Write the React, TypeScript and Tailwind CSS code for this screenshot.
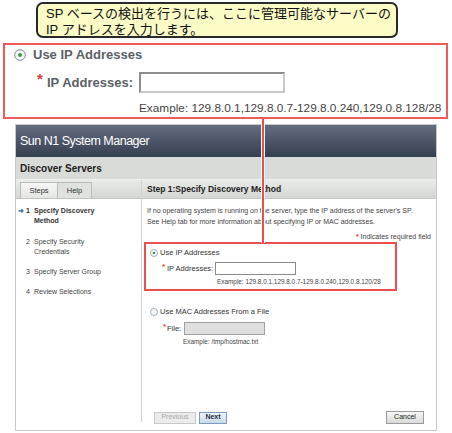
import React from "react";

const sans = { fontFamily: '"Liberation Sans", Arial, sans-serif' };

function Radio({ size, on }: { size: number; on?: boolean }) {
  return (
    <svg width={size} height={size} viewBox="0 0 12 12" className="shrink-0">
      <circle cx="6" cy="6" r="5.3" fill="#f4f6f8" stroke="#7d8fa0" strokeWidth="1" />
      {on && <circle cx="6" cy="6" r="2" fill="#3f9a3f" />}
    </svg>
  );
}

function Steps() {
  return (
    <div className="pt-[7px] text-[7px] leading-[10px] text-[#444]">
      <div className="flex font-bold text-[#333]">
        <span className="w-[10px] pl-[2px] text-[#2f6aa8]">➜</span>
        <span className="w-[8px]">1</span>
        <span>
          Specify Discovery
          <br />
          Method
        </span>
      </div>
      <div className="flex mt-[11px]">
        <span className="w-[10px]"></span>
        <span className="w-[8px]">2</span>
        <span>
          Specify Security
          <br />
          Credentials
        </span>
      </div>
      <div className="flex mt-[10px]">
        <span className="w-[10px]"></span>
        <span className="w-[8px]">3</span>
        <span>Specify Server Group</span>
      </div>
      <div className="flex mt-[10px]">
        <span className="w-[10px]"></span>
        <span className="w-[8px]">4</span>
        <span>Review Selections</span>
      </div>
    </div>
  );
}

export default function App() {
  return (
    <div className="relative w-[452px] h-[433px] bg-white overflow-hidden" style={sans}>
      {/* callout */}
      <div
        className="ml-[36px] mt-[2px] w-[362px] h-[36px] border-2 border-[#2a2a2a] rounded-[7px] bg-[#fbfbc6] pl-[8px] pt-[2px] text-[13px] leading-[16px] text-[#111]"
        style={{ fontFamily: '"Liberation Sans", "Noto Sans CJK JP", sans-serif' }}
      >
        SP ベースの検出を行うには、ここに管理可能なサーバーの
        <br />
        IP アドレスを入力します。
      </div>

      {/* enlarged view */}
      <div className="mt-[5px] ml-[3px] w-[445px] h-[76px] border-2 border-[#f05a5a]">
        <div className="flex items-center gap-[7px] pl-[9px] mt-[2px] h-[16px]">
          <Radio size={12} on />
          <span className="text-[13px] font-bold text-[#5b5f66]">Use IP Addresses</span>
        </div>
        <div className="flex items-center pl-[32px] mt-[9px] h-[21px]">
          <span className="text-[#e23c3c] font-bold text-[15px] leading-[10px] self-start mt-[2px] w-[10px]">*</span>
          <span className="text-[13px] font-bold text-[#5b5f66]">IP Addresses:</span>
          <div className="ml-[6px] w-[146px] h-[21px] border-2 border-t-[#8d8d8d] border-l-[#8d8d8d] border-b-[#c8c8c8] border-r-[#c8c8c8] bg-white"></div>
        </div>
        <div className="pl-[134px] mt-[8px] text-[11.8px] leading-[14px] text-[#444]">
          Example: 129.8.0.1,129.8.0.7-129.8.0.240,129.0.8.128/28
        </div>
      </div>

      {/* screenshot window */}
      <div className="mt-[5px] ml-[15px] w-[422px] h-[307px] border border-[#c9c9c9] flex flex-col">
        <div className="h-[32px] bg-gradient-to-b from-[#646e80] to-[#363f50] flex items-center pl-[4px]">
          <span className="text-white text-[12.5px] tracking-[-0.5px]">Sun N1 System Manager</span>
        </div>
        <div className="h-[23px] bg-[#d9dbd8] flex items-center pl-[4px] border-b border-[#eef0ee]">
          <span className="text-[10px] font-bold text-[#222]">Discover Servers</span>
        </div>
        <div className="flex flex-1">
          <div className="w-[126px] border-r border-[#d3d3d3] mb-[8px]">
            <div className="h-[19px] bg-gradient-to-b from-[#e9ebe8] to-[#d3d6d3] flex items-end pl-[4px] border-b border-[#c6c6c6]">
              <div className="w-[38px] h-[16px] bg-gradient-to-b from-[#f7f8f6] to-[#e3e5e2] border border-b-0 border-[#b9bcb9] text-[7.5px] text-[#333] flex items-center justify-center">
                Steps
              </div>
              <div className="w-[34px] h-[16px] bg-[#dfe1de] border border-l-0 border-b-0 border-[#b9bcb9] text-[7.5px] text-[#333] flex items-center justify-center">
                Help
              </div>
            </div>
            <Steps />
          </div>
          <div className="flex-1 flex flex-col">
            <div className="h-[19px] bg-gradient-to-b from-[#e9ebe8] to-[#d3d6d3] flex items-center pl-[5px] border-b border-[#c6c6c6]">
              <span className="text-[8.5px] font-bold text-[#222]">Step 1:Specify Discovery Method</span>
            </div>
            <div className="pl-[5px] pt-[6px] text-[7px] leading-[11px] text-[#444]">
              If no operating system is running on the server, type the IP address of the server's SP.
              <br />
              See Help tab for more information about specifying IP or MAC addresses.
            </div>
            <div className="mt-[5px] h-[10px] text-[7px] leading-[10px] text-right pr-[5px] text-[#444]">
              <span className="text-[#e23c3c] font-bold">*</span> Indicates required field
            </div>
            <div className="ml-[2px] w-[253px] h-[49px] border-2 border-[#ee4d4d]">
              <div className="flex items-center gap-[2px] pl-[4px] mt-[4px] h-[10px]">
                <Radio size={8} on />
                <span className="text-[7.5px] text-[#333]">Use IP Addresses</span>
              </div>
              <div className="flex items-center pl-[16px] mt-[4px] h-[13px]">
                <span className="text-[#e23c3c] font-bold text-[8px] leading-[6px] self-start mt-[2px] w-[5px]">*</span>
                <span className="text-[7.5px] text-[#333]">IP Addresses:</span>
                <div className="ml-[2px] w-[81px] h-[13px] border border-[#8a8a8a] bg-white"></div>
              </div>
              <div className="pl-[71px] mt-[3px] text-[6.4px] leading-[8px] text-[#444]">
                Example: 129.8.0.1,129.8.0.7-129.8.0.240,129.0.8.120/28
              </div>
            </div>
            <div className="flex items-center gap-[2px] pl-[8px] mt-[16px] h-[10px]">
              <Radio size={8} />
              <span className="text-[7.5px] text-[#333]">Use MAC Addresses From a File</span>
            </div>
            <div className="flex items-center pl-[21px] mt-[5px] h-[13px]">
              <span className="text-[#e23c3c] font-bold text-[8px] leading-[6px] self-start mt-[2px] w-[4px]">*</span>
              <span className="text-[7.5px] text-[#333]">File:</span>
              <div className="ml-[3px] w-[81px] h-[13px] border border-[#a0a0a0] bg-[#dedede]"></div>
            </div>
            <div className="pl-[41px] mt-[3px] text-[6.4px] leading-[8px] text-[#444]">Example: /tmp/hostmac.txt</div>
            <div className="flex-1"></div>
            <div className="flex items-center pl-[12px] pr-[12px] mb-[6px]">
              <div className="w-[42px] h-[12px] border border-[#c8c8c8] bg-[#ececec] text-[7px] text-[#a8a8a8] flex items-center justify-center">
                Previous
              </div>
              <div className="ml-[3px] w-[28px] h-[12px] border border-[#7d9cbd] bg-gradient-to-b from-[#eef4fa] to-[#c9d9ea] text-[7px] font-bold text-[#1d2e45] flex items-center justify-center">
                Next
              </div>
              <div className="flex-1"></div>
              <div className="w-[38px] h-[13px] border border-[#9a9a9a] bg-gradient-to-b from-[#f8f8f8] to-[#d9d9d9] text-[7px] text-[#222] flex items-center justify-center">
                Cancel
              </div>
            </div>
          </div>
        </div>
      </div>

      {/* connector line between highlight boxes */}
      <div className="absolute left-[261px] top-[119px] w-[4px] h-[124px] bg-white flex justify-center">
        <div className="w-[2px] h-full bg-[#ee4d4d]"></div>
      </div>
    </div>
  );
}
